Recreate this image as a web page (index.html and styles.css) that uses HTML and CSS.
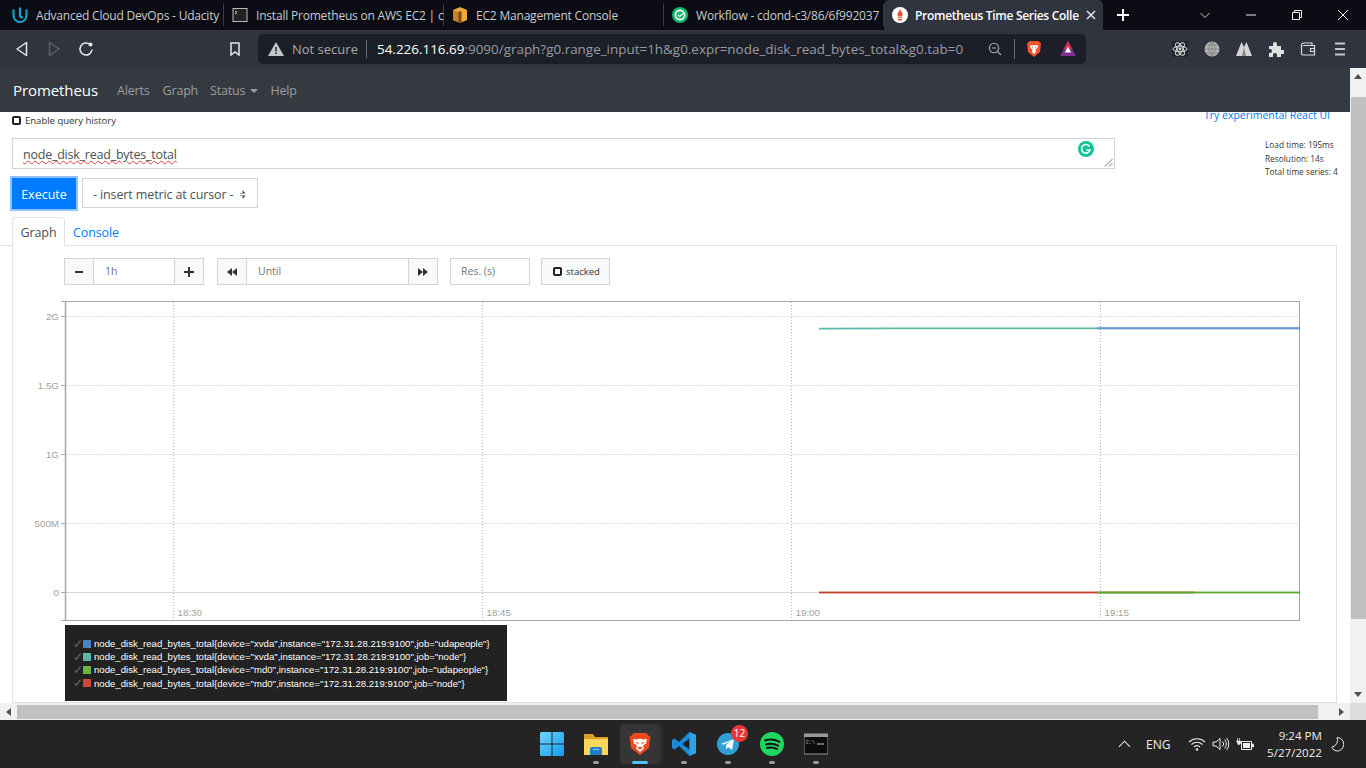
FILE: index.html
```html
<!DOCTYPE html>
<html lang="en">
<head>
    <meta charset="UTF-8">
    <title>Prometheus Time Series Collection and Processing Server</title>
    <link rel="stylesheet" href="styles.css">
</head>
<body>
    <!-- browser tabs -->
    <div class="tabstrip">
        <div class="tab">
            <svg class="fav" viewBox="0 0 16 16"><path d="M1.500 2.500v6a6.500 6.500 0 0 0 13 0v-6" fill="none" stroke="#12a9d6" stroke-width="2"/><path d="M8 .5v7.500c0 1.500 1.300 2.500 3 2.500" fill="none" stroke="#12a9d6" stroke-width="2.200"/></svg>
            <span class="tab-title">Advanced Cloud DevOps - Udacity</span>
        </div>
        <div class="tab">
            <svg class="fav" viewBox="0 0 16 16"><rect x="1" y="1.500" width="14" height="13" fill="#222" stroke="#bbb"/><path d="M3 4l2 1.500-2 1.500" fill="none" stroke="#ddd"/></svg>
            <span class="tab-title">Install Prometheus on AWS EC2 | c</span>
        </div>
        <div class="tab">
            <svg class="fav" viewBox="0 0 16 16"><path d="M8 0l7 3v10l-7 3-7-3V3z" fill="#f2a93b"/><path d="M8 6v10l-7-3V3z" fill="#c97f1f"/><path d="M6.500 4.500h3V16h-3z" fill="#7a4a12"/></svg>
            <span class="tab-title">EC2 Management Console</span>
        </div>
        <div class="tab">
            <svg class="fav" viewBox="0 0 16 16"><circle cx="8" cy="8" r="8" fill="#12b76a"/><circle cx="8" cy="8" r="4.600" fill="none" stroke="#fff" stroke-width="1.600"/><path d="M5.500 8l2 2 3.500-3.500" fill="none" stroke="#12b76a" stroke-width="1.800"/><path d="M6 8l1.700 1.700L11 6.400" fill="none" stroke="#fff" stroke-width="1.200"/></svg>
            <span class="tab-title">Workflow - cdond-c3/86/6f992037</span>
        </div>
        <div class="tab tab-active">
            <svg class="fav" viewBox="0 0 16 16"><circle cx="8" cy="8" r="8" fill="#fff"/><path d="M8 2c.6 2 2.600 3 2.600 5.600 0 .8-.4 1.400-.8 1.900H6.200c-.5-.5-.9-1.100-.9-1.900C5.300 5.800 7.500 4.500 8 2z" fill="#e6522c"/><path d="M5.500 10.200h5v1.100h-5zM6 12h4v1.600H6z" fill="#e6522c"/></svg>
            <span class="tab-title">Prometheus Time Series Colle</span>
            <svg class="tab-close" viewBox="0 0 10 10"><path d="M1 1l8 8M9 1l-8 8" stroke="#e8e8e8" stroke-width="1.500"/></svg>
        </div>
        <svg class="new-tab" viewBox="0 0 14 14"><path d="M7 1v12M1 7h12" stroke="#fff" stroke-width="2"/></svg>
        <div class="win-controls">
            <svg viewBox="0 0 12 12"><path d="M1.500 4l4.500 4.500L10.500 4" fill="none" stroke="#ccc"/></svg>
            <svg viewBox="0 0 12 12"><path d="M1 6h10" stroke="#eee"/></svg>
            <svg viewBox="0 0 12 12"><path d="M1.500 3.500h7v7h-7zM3.500 3.500v-2h7v7h-2" fill="none" stroke="#eee"/></svg>
            <svg viewBox="0 0 12 12"><path d="M1 1l10 10M11 1L1 11" stroke="#eee"/></svg>
        </div>
    </div>

    <!-- address bar -->
    <div class="toolbar">
        <div class="nav-btns">
            <svg viewBox="0 0 16 16"><path d="M12.500 1.500v13L3 8z" fill="none" stroke="#e6e6e6" stroke-width="1.500" stroke-linejoin="round"/></svg>
            <svg viewBox="0 0 16 16"><path d="M3.500 1.500v13L13 8z" fill="none" stroke="#5c606b" stroke-width="1.500" stroke-linejoin="round"/></svg>
            <svg viewBox="0 0 16 16"><path d="M14 8.500a6 6 0 1 1-2-5" fill="none" stroke="#e6e6e6" stroke-width="1.600"/><circle cx="12.500" cy="3.500" r="2" fill="#e6e6e6"/></svg>
        </div>
        <svg class="bookmark" viewBox="0 0 12 14"><path d="M2 1h8v12L6 10l-4 3z" fill="none" stroke="#e6e6e6" stroke-width="1.500"/></svg>
        <div class="urlbar">
            <svg class="warn" viewBox="0 0 16 14"><path d="M8 0l8 14H0z" fill="#c4c6cb"/><path d="M7.300 5h1.400v4.500H7.300zM7.300 10.500h1.400V12H7.300z" fill="#1c1f28"/></svg>
            <span class="not-secure">Not secure</span>
            <span class="url"><b>54.226.116.69</b>:9090/graph?g0.range_input=1h&amp;g0.expr=node_disk_read_bytes_total&amp;g0.tab=0</span>
            <svg class="zoom-icon" viewBox="0 0 14 14"><circle cx="6" cy="6" r="4.700" fill="none" stroke="#aaa" stroke-width="1.100"/><path d="M9.500 9.500L13 13M3.800 6h4.400" stroke="#aaa" stroke-width="1.100"/></svg>
            <span class="url-sep"></span>
            <svg class="brave" viewBox="0 0 16 18"><path d="M3.500 1h9l2.500 2.500-1 8.500-6 5-6-5-1-8.500z" fill="#f0532d"/><path d="M4 5l2.500.5L8 5l1.500.5L12 5l-.5 3-2 1.500L10 12l-2 2-2-2 .5-2.500-2-1.500z" fill="#fff"/><path d="M6 7.500l1 .5M10 7.500L9 8" stroke="#f0532d"/></svg>
            <svg class="rewards" viewBox="0 0 18 18"><path d="M9 1l8 15H1z" fill="#7c2f8f"/><path d="M9 1l4.200 8H4.800z" fill="#d9304a"/><path d="M9 6.500l3.200 6H5.800z" fill="#fff"/></svg>
        </div>
        <div class="ext-icons">
            <svg viewBox="0 0 16 16"><rect width="16" height="16" fill="#23262f"/><g fill="none" stroke="#ddd"><ellipse cx="8" cy="8" rx="7" ry="2.800"/><ellipse cx="8" cy="8" rx="7" ry="2.800" transform="rotate(60 8 8)"/><ellipse cx="8" cy="8" rx="7" ry="2.800" transform="rotate(120 8 8)"/></g><circle cx="8" cy="8" r="1.400" fill="#ddd"/></svg>
            <svg viewBox="0 0 16 16"><circle cx="8" cy="8" r="7.500" fill="#b5b5b5"/><path d="M8 .5v15M.5 8h15M2 4h12M2 12h12M8 .5C4 4 4 12 8 15.500M8 .5c4 3.500 4 11.500 0 15" fill="none" stroke="#777" stroke-width=".7"/></svg>
            <svg viewBox="0 0 16 16"><path d="M0 15L5.500 1 8 6l2.500-5L16 15z" fill="#d5d5d5"/><path d="M8 6l-2 9h4z" fill="#888"/></svg>
            <svg viewBox="0 0 16 16"><path d="M1 5h4V3a2 2 0 0 1 4 0v2h4v4h2a2 2 0 0 1 0 4h-2v3H9v-2a2 2 0 0 0-4 0v2H1v-4h1a2 2 0 0 0 0-4H1z" fill="#e0e0e0"/></svg>
            <svg viewBox="0 0 16 16"><path d="M1.500 4a2 2 0 0 1 2-2h8.500v2.500M1.500 4v8.500A1.500 1.500 0 0 0 3 14h11.500V4.500H3" fill="none" stroke="#ddd" stroke-width="1.200"/><path d="M10.500 7.500h4v3h-4z" fill="none" stroke="#ddd" stroke-width="1.100"/></svg>
            <svg viewBox="0 0 16 16"><path d="M3 2.500h10M3 8h10M3 13.500h10" stroke="#c8c8c8" stroke-width="2"/></svg>
        </div>
    </div>

    <div class="viewport">
        <div class="page">
            <nav class="navbar">
                <span class="brand">Prometheus</span>
                <span class="nav-link">Alerts</span>
                <span class="nav-link">Graph</span>
                <span class="nav-link nav-link-status">Status <i class="caret"></i></span>
                <span class="nav-link">Help</span>
            </nav>
            <div class="content">
                <div class="history-row">
                    <label class="check"><i class="check-box"></i>Enable query history</label>
                    <a class="react-link">Try experimental React UI</a>
                </div>
                <div class="query-row">
                    <div class="expr-box">
                        <span class="expr-text">node_disk_read_bytes_total</span>
                        <span class="grammarly">
                            <svg viewBox="0 0 16 16"><circle cx="8" cy="8" r="8" fill="#15c39a"/><path d="M11.500 5.500A4.300 4.300 0 1 0 12 9H8.500" fill="none" stroke="#fff" stroke-width="1.500"/></svg>
                        </span>
                        <svg class="resize-grip" viewBox="0 0 9 9"><path d="M8.500 1L1 8.500M8.500 5L5 8.500" stroke="#555" stroke-width=".8"/></svg>
                    </div>
                    <div class="stats">
                        <div>Load time: 195ms</div>
                        <div>Resolution: 14s</div>
                        <div>Total time series: 4</div>
                    </div>
                </div>
                <div class="action-row">
                    <button class="execute">Execute</button>
                    <div class="metric-select">- insert metric at cursor - <i class="updown"></i></div>
                </div>
                <div class="tabs">
                    <span class="pane-tab pane-tab-active">Graph</span>
                    <span class="pane-tab">Console</span>
                </div>
                <div class="pane">
                    <div class="controls">
                        <div class="group">
                            <span class="addon"><svg viewBox="0 0 10 10"><path d="M1 5h8" stroke="#333" stroke-width="2"/></svg></span>
                            <span class="field field-range">1h</span>
                            <span class="addon"><svg viewBox="0 0 10 10"><path d="M0 5h10M5 0v10" stroke="#333" stroke-width="2"/></svg></span>
                        </div>
                        <div class="group">
                            <span class="addon"><svg viewBox="0 0 10 10"><path d="M5 1v8L0 5zM10 1v8L5 5z" fill="#333"/></svg></span>
                            <span class="field field-until">Until</span>
                            <span class="addon"><svg viewBox="0 0 10 10"><path d="M0 1v8l5-4zM5 1v8l5-4z" fill="#333"/></svg></span>
                        </div>
                        <span class="field field-res">Res. (s)</span>
                        <span class="stacked"><i class="check-box"></i>stacked</span>
                    </div>
                    <svg class="plot" viewBox="13 298 1290 326">
                        <!-- horizontal grid -->
                        <path d="M66 316.500h1233M66 385.500h1233M66 454.500h1233M66 523.500h1233" stroke="#e2e2e2" stroke-dasharray="2 1"/>
                        <path d="M66 592.500h1233" stroke="#d8d8d8"/>
                        <!-- vertical grid -->
                        <path d="M173.500 302v319M482.500 302v319M791.500 302v319M1100.500 302v319" stroke="#b5b5b5" stroke-dasharray="1 2"/>
                        <!-- ticks -->
                        <path d="M61 301.500h4M61 316.500h4M61 385.500h4M61 454.500h4M61 523.500h4M61 592.500h4M61 620.500h4" stroke="#aaa"/>
                        <rect x="65.500" y="301.500" width="1234" height="319" fill="none" stroke="#a6a6a6"/>
                        <path d="M65.500 301.500v319" stroke="#a6a6a6" stroke-width="1.500"/>
                        <!-- series -->
                        <path d="M819 328.700L895 328.300H1097" stroke="#5eb8a8" stroke-opacity=".3" stroke-width="3" fill="none"/>
                        <path d="M819 328.700L895 328.300H1097" stroke="#5eb8a8" stroke-width="1.200" fill="none"/>
                        <path d="M1097 328.200H1300" stroke="#4a84be" stroke-opacity=".4" stroke-width="3" fill="none"/>
                        <path d="M1097 328.200H1300" stroke="#4a84be" stroke-width="1.200" fill="none"/>
                        <path d="M819 592.500H1097" stroke="#cb4b38" stroke-opacity=".25" stroke-width="3"/>
                        <path d="M819 592.500H1097" stroke="#c04030" stroke-width="1.300"/>
                        <path d="M1097 592.500H1300" stroke="#6db33f" stroke-opacity=".25" stroke-width="3"/>
                        <path d="M1097 592.500H1194" stroke="#a08a50" stroke-opacity=".5" stroke-width="3"/>
                        <path d="M1097 592.500H1300" stroke="#5aa82e" stroke-width="1.300"/>
                        <g class="axis-text">
                            <text x="59" y="320" text-anchor="end">2G</text>
                            <text x="59" y="389" text-anchor="end">1.5G</text>
                            <text x="59" y="458" text-anchor="end">1G</text>
                            <text x="59" y="527" text-anchor="end">500M</text>
                            <text x="59" y="596" text-anchor="end">0</text>
                            <text x="177.500" y="616">18:30</text>
                            <text x="486.500" y="616">18:45</text>
                            <text x="795.500" y="616">19:00</text>
                            <text x="1104.500" y="616">19:15</text>
                        </g>
                    </svg>
                    <div class="legend">
                        <div class="legend-item"><i class="tick">✓</i><i class="swatch swatch-blue"></i>node_disk_read_bytes_total{device="xvda",instance="172.31.28.219:9100",job="udapeople"}</div>
                        <div class="legend-item"><i class="tick">✓</i><i class="swatch swatch-teal"></i>node_disk_read_bytes_total{device="xvda",instance="172.31.28.219:9100",job="node"}</div>
                        <div class="legend-item"><i class="tick">✓</i><i class="swatch swatch-green"></i>node_disk_read_bytes_total{device="md0",instance="172.31.28.219:9100",job="udapeople"}</div>
                        <div class="legend-item"><i class="tick">✓</i><i class="swatch swatch-red"></i>node_disk_read_bytes_total{device="md0",instance="172.31.28.219:9100",job="node"}</div>
                    </div>
                </div>
            </div>
        </div>
        <div class="vscroll">
            <i class="arrow-up"></i>
            <div class="vthumb"></div>
            <i class="arrow-down"></i>
        </div>
        <div class="hscroll">
            <i class="arrow-left"></i>
            <div class="hthumb"></div>
            <i class="arrow-right"></i>
        </div>
        <div class="corner"></div>
    </div>

    <!-- windows taskbar -->
    <div class="taskbar">
        <div class="task-icons">
            <span class="task">
                <svg viewBox="0 0 24 24">
                    <defs><linearGradient id="win-blue" x1="0" y1="0" x2="1" y2="1"><stop offset="0" stop-color="#6fd6fb"/><stop offset="1" stop-color="#0f9cf0"/></linearGradient></defs>
                    <path d="M0 1.500A1.500 1.500 0 0 1 1.500 0h10v11.500H0zM12.500 0h10A1.500 1.500 0 0 1 24 1.500v10H12.500zM0 12.500h11.500V24h-10A1.500 1.500 0 0 1 0 22.500zM12.500 12.500H24v10a1.500 1.500 0 0 1-1.500 1.500h-10z" fill="url(#win-blue)"/>
                </svg>
            </span>
            <span class="task task-run">
                <svg viewBox="0 0 24 24"><path d="M0 2h9l2 3h13v18H0z" fill="#d9a021"/><path d="M0 7h24v16H0z" fill="#fcd65c"/><path d="M8 15h8a2 2 0 0 1 2 2v6H6v-6a2 2 0 0 1 2-2z" fill="#1f7fc4"/><path d="M9 17.500h6" stroke="#8ec8ee"/></svg>
            </span>
            <span class="task task-active">
                <svg viewBox="0 0 24 24"><path d="M6 1h12l2 2 2.500 2-1.500 11-9 7-9-7L1.500 5 4 3z" fill="#f0491f"/><path d="M5 7l4 .5L12 6.500l3 1 4-.5-1 4.500-3 2 1 3-4 3.500-4-3.500 1-3-3-2z" fill="#fff"/><path d="M8 10.500l2.500 1M16 10.500l-2.500 1M10.500 15.500h3l-1.500 1.500z" stroke="#f0491f" stroke-width="1.200" fill="#f0491f"/></svg>
            </span>
            <span class="task task-run">
                <svg viewBox="0 0 24 24"><path d="M17.500 0L24 3v18l-6.500 3L7 14l-4.500 3.500L0 16v-8l2.500-1.500L7 10z" fill="#1c8ad6"/><path d="M17.500 6.500L10 12l7.500 5.500z" fill="#242424"/><path d="M17.500 0L24 3v18l-6.500 3z" fill="#2aa3ea"/></svg>
            </span>
            <span class="task task-run">
                <svg viewBox="0 0 24 24"><circle cx="12" cy="12" r="11" fill="#2f9fd8"/><path d="M5 12l13-5-2 11-4-3-2 2.500V13l5-4-7 3.500z" fill="#fff"/></svg>
                <span class="badge">12</span>
            </span>
            <span class="task task-run">
                <svg viewBox="0 0 24 24"><circle cx="12" cy="12" r="12" fill="#1ed760"/><path d="M5 8.500c5-1.500 10-1 14.500 1.300M6 12.500c4.500-1.200 8.500-.8 12 1.200M7 16c3.500-.9 7-.6 10 1" fill="none" stroke="#191414" stroke-width="2" stroke-linecap="round"/></svg>
            </span>
            <span class="task task-run">
                <svg viewBox="0 0 24 24"><rect y="2" width="24" height="20" fill="#0c0c0c" stroke="#9a9a9a"/><rect y="2" width="24" height="3" fill="#9a9a9a"/><text x="2" y="12" class="cmd-text">C:\</text><path d="M13 12h7" stroke="#ccc"/></svg>
            </span>
        </div>
        <div class="tray">
            <svg class="tray-chevron" viewBox="0 0 14 8"><path d="M1 7l6-6 6 6" fill="none" stroke="#eee" stroke-width="1.100"/></svg>
            <span class="lang">ENG</span>
            <svg class="tray-icon" viewBox="0 0 18 14"><path d="M1 5a11.500 11.500 0 0 1 16 0M3.500 7.500a8 8 0 0 1 11 0M6 10a4.500 4.500 0 0 1 6 0" fill="none" stroke="#eee" stroke-width="1.100"/><circle cx="9" cy="12.500" r="1.200" fill="#eee"/></svg>
            <svg class="tray-icon" viewBox="0 0 18 14"><path d="M1 5h3l4-3.500v11L4 9H1z" fill="none" stroke="#eee"/><path d="M10.500 4.500a3.500 3.500 0 0 1 0 5M12.500 2.500a6.500 6.500 0 0 1 0 9M14.500 1a9 9 0 0 1 0 12" fill="none" stroke="#eee"/></svg>
            <svg class="tray-icon" viewBox="0 0 18 14"><path d="M5.500 4.500h10v8h-10z" fill="none" stroke="#eee"/><path d="M7 6h7v5H7z" fill="#eee"/><path d="M16 7h1.500v3H16zM1.500 1v3M3.500 1v3M.5 4h4v2.500L2.500 8z" stroke="#eee" fill="#eee" stroke-width=".7"/></svg>
            <div class="clock"><div>9:24 PM</div><div>5/27/2022</div></div>
            <svg class="moon" viewBox="0 0 16 18"><path d="M8 1a8 8 0 0 1-6 11 7 7 0 0 0 6 4.500A7.500 7.500 0 0 0 8 1z" fill="none" stroke="#eee" stroke-width="1.100"/></svg>
        </div>
    </div>
</body>
</html>
```

FILE: styles.css
```css
* {
    box-sizing: border-box;
}

html, body {
    margin: 0;
    height: 100%;
    overflow: hidden;
}

body {
    width: 1366px;
    height: 768px;
    display: flex;
    flex-direction: column;
    font-family: "Open Sans", "Noto Sans", sans-serif;
    background-color: #fff;
}

i {
    font-style: normal;
}

/* tab strip */
.tabstrip {
    height: 30px;
    display: flex;
    align-items: stretch;
    padding-left: 4px;
    background-color: #0b0c14;
}

.tab {
    width: 220px;
    display: flex;
    align-items: center;
    padding-left: 8px;
    gap: 8px;
    border-right: 1px solid #3a3d47;
    margin-top: 4px;
    margin-bottom: 4px;
}

.tab-active {
    margin: 0;
    width: 219px;
    padding-left: 8px;
    gap: 7px;
    border-right: 0;
    border-radius: 5px 5px 0 0;
    background-color: #30343f;
}

.fav {
    width: 16px;
    height: 16px;
    flex: none;
}

.tab-title {
    font-size: 12px;
    letter-spacing: -0.2px;
    color: #c9cbd0;
    white-space: nowrap;
    flex: 1;
}

.tab-active .tab-title {
    color: #fff;
    font-weight: 600;
    letter-spacing: -0.3px;
}

.tab-close {
    width: 10px;
    height: 10px;
    margin-right: 7px;
    flex: none;
}

.new-tab {
    width: 14px;
    height: 14px;
    margin: 8px 0 0 13px;
}

.win-controls {
    margin-left: auto;
    display: flex;
    gap: 34px;
    padding: 9px 17px 0 0;
}

.win-controls svg {
    width: 12px;
    height: 12px;
}

/* toolbar */
.toolbar {
    height: 38px;
    display: flex;
    align-items: center;
    background-color: #30343f;
}

.nav-btns {
    display: flex;
    gap: 16px;
    padding-left: 14px;
    width: 229px;
}

.nav-btns svg {
    width: 16px;
    height: 16px;
}

.bookmark {
    width: 12px;
    height: 14px;
}

.urlbar {
    width: 828px;
    height: 30px;
    margin-left: 17px;
    display: flex;
    align-items: center;
    border-radius: 5px;
    padding-left: 10px;
    background-color: #1c1f28;
}

.warn {
    width: 16px;
    height: 14px;
}

.not-secure {
    margin-left: 8px;
    width: 75px;
    height: 18px;
    font-size: 13px;
    line-height: 18px;
    color: #a7a9ae;
    border-right: 1px solid #6a6c73;
}

.url {
    margin-left: 10px;
    width: 611px;
    font-size: 13.450px;
    color: #999ba1;
    white-space: nowrap;
}

.url b {
    color: #fff;
    font-weight: 400;
}

.zoom-icon {
    width: 14px;
    height: 14px;
}

.url-sep {
    width: 1px;
    height: 20px;
    margin-left: 12px;
    background-color: #6a6c73;
}

.brave {
    width: 16px;
    height: 18px;
    margin-left: 11px;
}

.rewards {
    width: 18px;
    height: 18px;
    margin-left: 17px;
}

.ext-icons {
    display: flex;
    gap: 16px;
    margin-left: 86px;
}

.ext-icons svg {
    width: 16px;
    height: 16px;
}

/* page viewport with scrollbars */
.viewport {
    height: 652px;
    display: grid;
    grid-template-columns: 1350px 16px;
    grid-template-rows: 635px 17px;
}

.page {
    display: flex;
    flex-direction: column;
    overflow: hidden;
    background-color: #fff;
}

.navbar {
    height: 44px;
    flex: none;
    display: flex;
    align-items: center;
    padding-left: 13px;
    background-color: #343a40;
    position: relative;
    z-index: 1;
}

.brand {
    font-size: 15px;
    letter-spacing: -0.08px;
    color: #fff;
    margin-right: 19px;
}

.nav-link {
    font-size: 12.500px;
    letter-spacing: -0.18px;
    color: #9a9da0;
    margin-right: 13px;
}

.nav-link-status {
    margin-left: -1px;
    margin-right: 12px;
}

.caret {
    display: inline-block;
    margin-left: 2px;
    vertical-align: 2px;
    border-top: 4px solid #9a9da0;
    border-left: 4px solid transparent;
    border-right: 4px solid transparent;
}

.content {
    flex: 1;
    display: flex;
    flex-direction: column;
    color: #212529;
}

.history-row {
    height: 26px;
    display: flex;
    justify-content: space-between;
    padding: 0 20px 0 12px;
}

.check {
    display: flex;
    align-items: center;
    height: 17px;
    font-size: 9.500px;
    color: #333;
}

.check-box {
    width: 9px;
    height: 9px;
    margin-right: 4px;
    border: 2px solid #222;
    border-radius: 2px;
    background-color: #fff;
}

.react-link {
    margin-top: -4px;
    font-size: 10.500px;
    color: #007bff;
}

.query-row {
    height: 40px;
    display: flex;
    padding-left: 12px;
}

.expr-box {
    width: 1103px;
    height: 31px;
    display: flex;
    align-items: center;
    padding: 2px 0 0 10px;
    position: relative;
    border: 1px solid #ced4da;
}

.expr-text {
    font-size: 12.500px;
    letter-spacing: -0.23px;
    color: #495057;
    text-decoration: underline wavy #e04040 1px;
    text-underline-offset: 1px;
}

.grammarly {
    position: absolute;
    top: 2px;
    right: 20px;
    width: 16px;
    height: 16px;
}

.grammarly svg {
    display: block;
}

.resize-grip {
    position: absolute;
    right: 1px;
    bottom: 1px;
    width: 9px;
    height: 9px;
}

.stats {
    margin-left: 150px;
    font-size: 8.300px;
    line-height: 13.500px;
    color: #333;
}

.action-row {
    height: 39px;
    display: flex;
    gap: 6px;
    padding-left: 12px;
}

.execute {
    width: 64px;
    height: 31px;
    padding: 1px 0 0;
    border: 1px solid #007bff;
    background-color: #007bff;
    color: #fff;
    font: 12.500px "Open Sans", sans-serif;
    box-shadow: 0 0 0 2px rgba(0, 123, 255, 0.45);
}

.metric-select {
    width: 176px;
    height: 30px;
    line-height: 29px;
    padding: 1px 0 0 10px;
    font-size: 12.500px;
    letter-spacing: -0.12px;
    color: #495057;
    border: 1px solid #ced4da;
    white-space: nowrap;
}

.updown {
    display: inline-block;
    width: 6px;
    height: 9px;
    margin-left: 3px;
    background: linear-gradient(#444 0 40%, transparent 40% 60%, #444 60%);
    clip-path: polygon(50% 0, 100% 40%, 0 40%, 0 60%, 100% 60%, 50% 100%);
}

.tabs {
    height: 29px;
    display: flex;
    padding-left: 12px;
    margin-right: 13px;
    border-bottom: 1px solid #dee2e6;
}

.pane-tab {
    padding: 2px 8px 0;
    font-size: 12.500px;
    letter-spacing: -0.1px;
    line-height: 28px;
    color: #007bff;
}

.pane-tab-active {
    width: 53px;
    height: 29px;
    text-align: center;
    padding: 1px 0 0;
    color: #495057;
    background-color: #fff;
    border: 1px solid #dee2e6;
    border-bottom-color: #fff;
    border-radius: 4px 4px 0 0;
}

.pane {
    flex: 1;
    margin: 0 13px 0 12px;
    border: 1px solid #dee2e6;
    border-top: 0;
    padding-top: 12px;
}

.controls {
    height: 27px;
    display: flex;
    gap: 12px;
    padding-left: 51px;
}

.group {
    display: flex;
}

.group + .group {
    margin-left: 1px;
}

.addon {
    width: 30px;
    height: 27px;
    display: flex;
    align-items: center;
    justify-content: center;
    background-color: #f8f9fa;
    border: 1px solid #ced4da;
}

.addon svg {
    width: 10px;
    height: 10px;
}

.field {
    height: 27px;
    padding-left: 10px;
    font-size: 10.500px;
    line-height: 25px;
    color: #6c757d;
    border: 1px solid #ced4da;
    border-left: 0;
    border-right: 0;
}

.field-range {
    width: 80px;
    padding-left: 11px;
}

.field-until {
    width: 161px;
    padding-left: 11px;
}

.field-res {
    width: 80px;
    border: 1px solid #ced4da;
}

.stacked {
    width: 69px;
    height: 27px;
    margin-left: -1px;
    display: flex;
    align-items: center;
    padding-left: 11px;
    font-size: 9.500px;
    color: #333;
    background-color: #f8f9fa;
    border: 1px solid #ced4da;
}

.plot {
    display: block;
    width: 1290px;
    height: 326px;
    margin-top: 13px;
}

.axis-text text {
    font-family: "Liberation Sans", Arial, sans-serif;
    font-size: 9.800px;
    fill: #a0a0a0;
}

.legend {
    width: 442px;
    height: 76px;
    margin: 1px 0 0 52px;
    padding: 12px 0 0 8px;
    background-color: #222;
}

.legend-item {
    height: 13.200px;
    display: flex;
    align-items: center;
    font-family: "Liberation Sans", Arial, sans-serif;
    font-size: 9.600px;
    color: #fff;
    white-space: nowrap;
}

.tick {
    width: 10px;
    font-size: 12px;
    color: #666;
}

.swatch {
    width: 8px;
    height: 8px;
    margin-right: 3px;
}

.swatch-blue {
    background-color: #4a84be;
}

.swatch-teal {
    background-color: #5eb8a8;
}

.swatch-green {
    background-color: #6db33f;
}

.swatch-red {
    background-color: #cb4b38;
}

/* scrollbars */
.vscroll {
    display: flex;
    flex-direction: column;
    align-items: center;
    background-color: #f1f1f1;
}

.vthumb {
    width: 15px;
    height: 522px;
    margin-top: 18px;
    background-color: #c1c1c1;
}

.arrow-up {
    margin-top: 6px;
    border-bottom: 5px solid #505050;
    border-left: 4px solid transparent;
    border-right: 4px solid transparent;
}

.arrow-down {
    margin-top: auto;
    margin-bottom: 6px;
    border-top: 5px solid #505050;
    border-left: 4px solid transparent;
    border-right: 4px solid transparent;
}

.hscroll {
    display: flex;
    align-items: center;
    background-color: #f1f1f1;
}

.hthumb {
    width: 1301px;
    height: 14px;
    margin-left: 6px;
    background-color: #c1c1c1;
}

.arrow-left {
    margin-left: 6px;
    border-right: 5px solid #505050;
    border-top: 4px solid transparent;
    border-bottom: 4px solid transparent;
}

.arrow-right {
    margin-left: auto;
    margin-right: 6px;
    border-left: 5px solid #505050;
    border-top: 4px solid transparent;
    border-bottom: 4px solid transparent;
}

.corner {
    background-color: #dcdcdc;
}

/* taskbar */
.taskbar {
    height: 48px;
    display: flex;
    align-items: center;
    padding-left: 532px;
    background-color: #242424;
}

.task-icons {
    display: flex;
    gap: 4px;
}

.task {
    width: 40px;
    height: 40px;
    display: flex;
    align-items: center;
    justify-content: center;
    position: relative;
    border-radius: 4px;
}

.task svg {
    width: 24px;
    height: 24px;
}

.task-run::after {
    content: "";
    position: absolute;
    left: 17px;
    bottom: 0;
    width: 6px;
    height: 3px;
    border-radius: 2px;
    background-color: #9a9a9a;
}

.task-active {
    background-color: #353535;
    box-shadow: 3px 0 0 #2c2c2c;
}

.task-active::after {
    content: "";
    position: absolute;
    left: 12px;
    bottom: 0;
    width: 16px;
    height: 3px;
    border-radius: 2px;
    background-color: #4cc2ff;
}

.badge {
    position: absolute;
    top: 1px;
    right: 0;
    width: 17px;
    height: 17px;
    border-radius: 50%;
    font-size: 10px;
    line-height: 17px;
    text-align: center;
    color: #fff;
    background-color: #e53935;
}

.cmd-text {
    font: 5px "Liberation Mono", monospace;
    fill: #ccc;
}

.tray {
    display: flex;
    align-items: center;
    margin-left: 282px;
}

.tray-chevron {
    width: 13px;
    height: 8px;
}

.lang {
    margin-left: 15px;
    width: 42px;
    font-size: 12px;
    color: #eee;
}

.tray-icon {
    width: 18px;
    height: 14px;
}

.tray-icon + .tray-icon {
    margin-left: 6px;
}

.clock {
    margin-left: 13px;
    width: 55px;
    font-size: 11.600px;
    line-height: 17px;
    text-align: right;
    color: #eee;
}

.moon {
    width: 14px;
    height: 17px;
    margin-left: 8px;
}
```
